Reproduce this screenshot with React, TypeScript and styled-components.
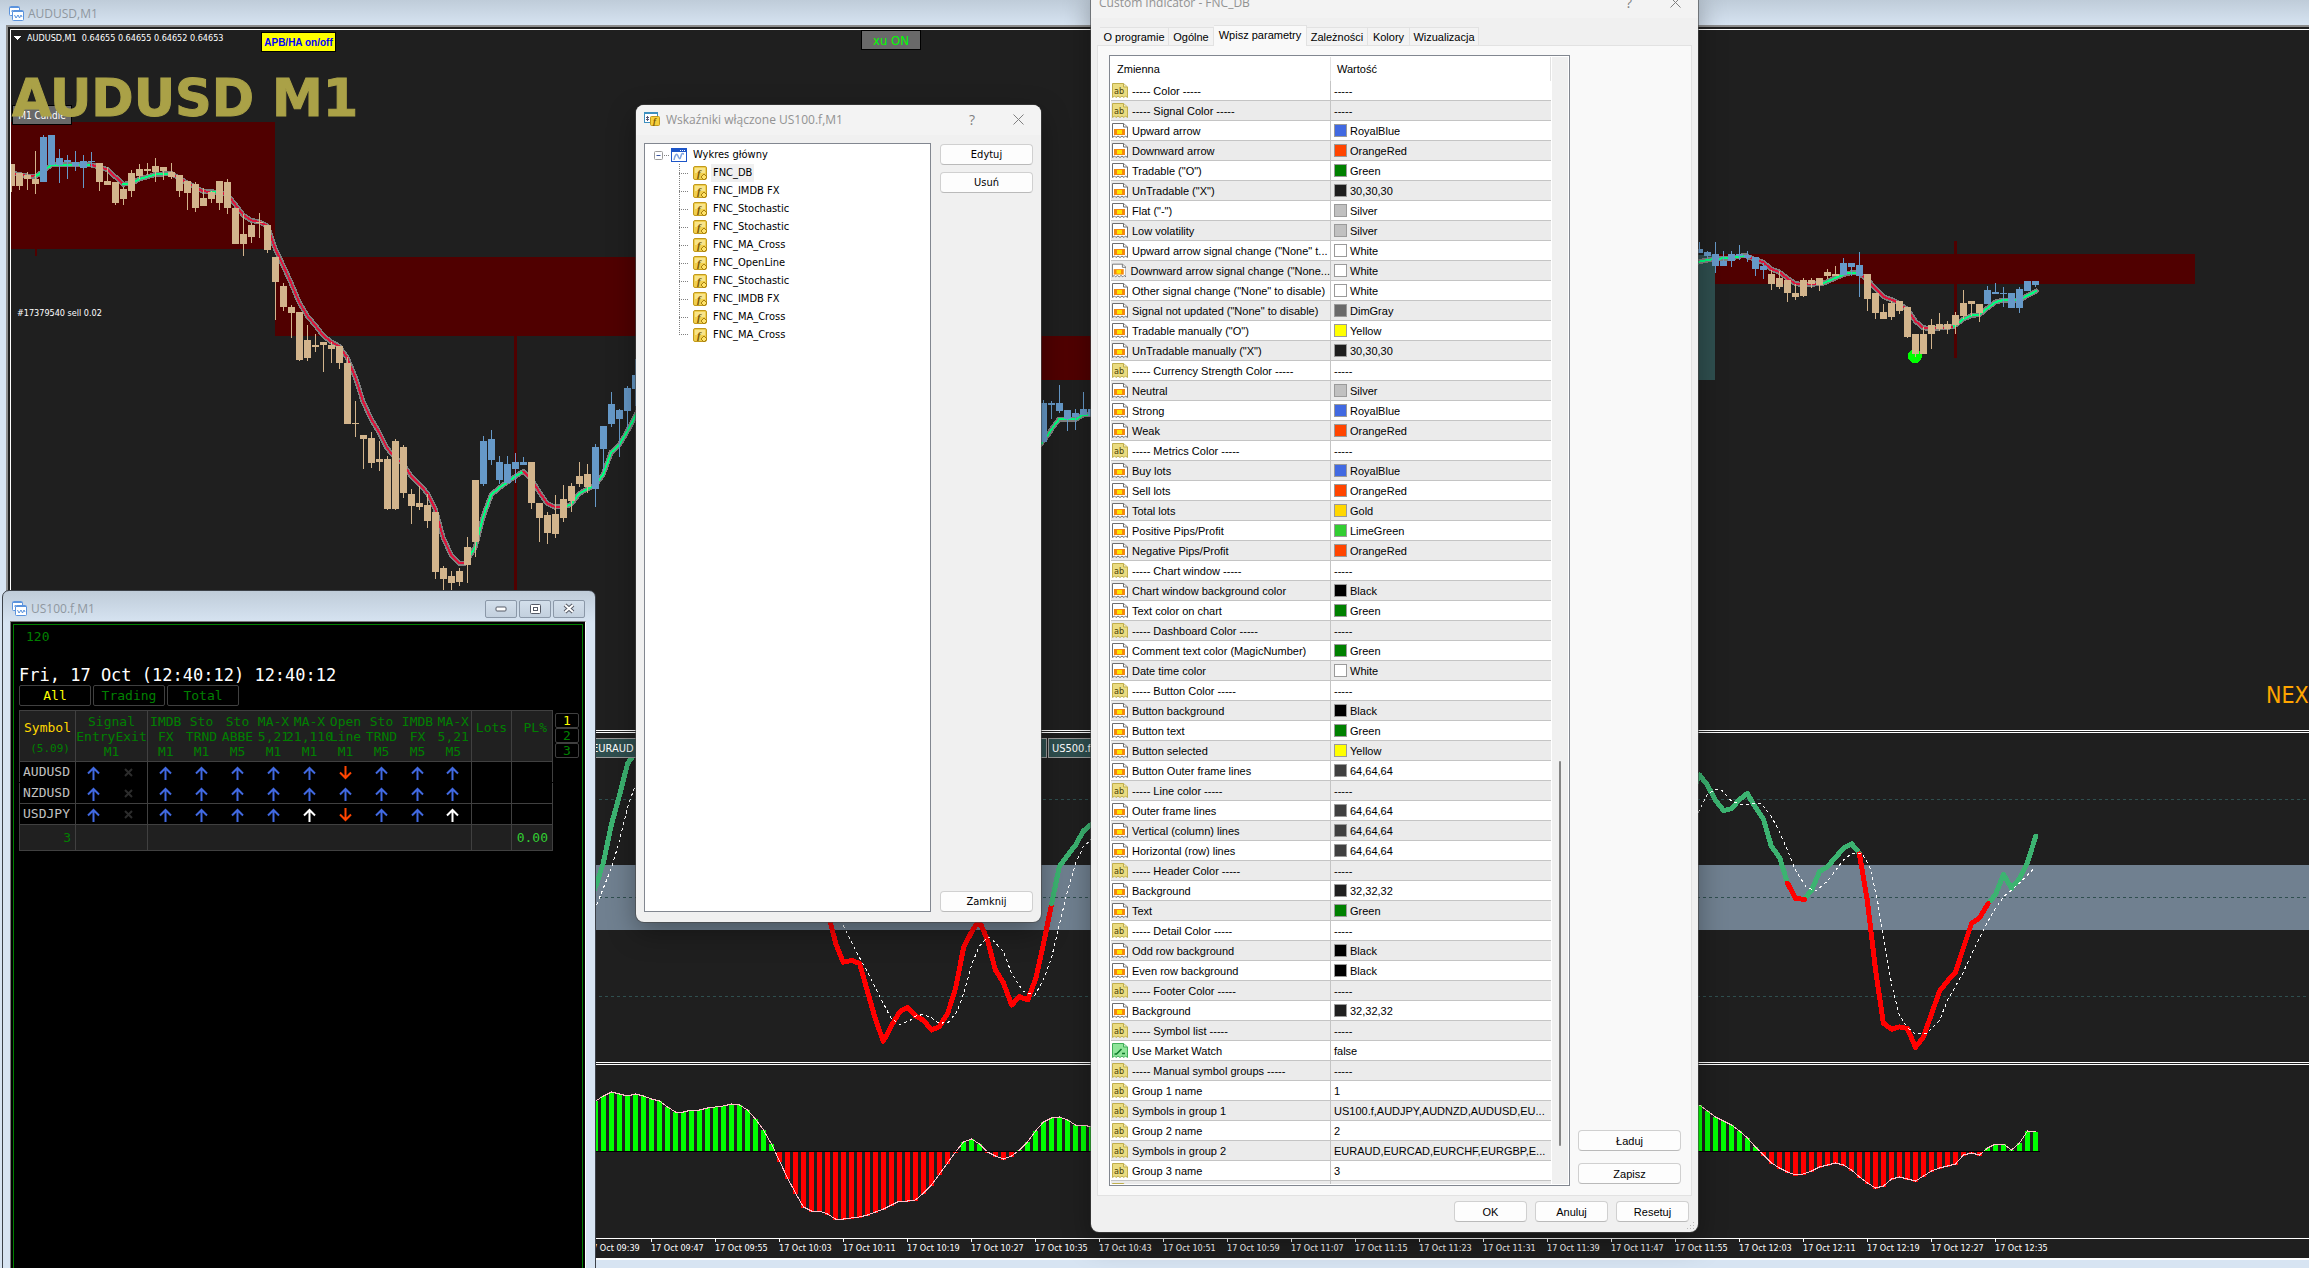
import React from "react";
import styled, { createGlobalStyle } from "styled-components";

const TAHOMA = `"DejaVu Sans Condensed", "DejaVu Sans", "Liberation Sans", sans-serif`;
const ARIAL = `"Liberation Sans", Arial, sans-serif`;
const SEGOE = `"Open Sans", "Noto Sans", sans-serif`;
const MONO = `"DejaVu Sans Mono", "Liberation Mono", monospace`;

const GlobalStyle = createGlobalStyle`
  * { box-sizing: border-box; }
  body { margin: 0; background: #d7e4f2; font-family: ${ARIAL}; font-size: 11px; color: #000; overflow: hidden; }
  button { font: inherit; margin: 0; padding: 0; cursor: pointer; }
`;

/* ---------- chart data ---------- */

type Scale = { sx: number; sy: number; ox: number; oy: number };
type Kind = "t" | "b";
type Candle = [number, number, number, number, Kind];
type Pt = [number, number];
type Line = { color: string; pts: Pt[] };

const RED = "#ff0000";
const SEA = "#3cb371";
const MA_UP = "#00ff7f";
const MA_DOWN = "#dc143c";

const leftScale: Scale = { sx: 2.376, sy: 2.613, ox: 0, oy: 0 };
const midScale: Scale = { sx: 3, sy: 3, ox: 840, oy: 10 };
const rightScale: Scale = { sx: 2.533, sy: 2.45, ox: 1690, oy: 0 };
const lowLeft: Scale = { sx: 3, sy: 2.761, ox: 590, oy: 700 };
const lowRight: Scale = { sx: 2.533, sy: 2.497, ox: 1690, oy: 640 };

const yOf = (s: Scale, v: number) => Math.round(v / s.sy + s.oy);
const slotX = (i: number) => 8 + 8 * i;

/* body top, body bottom, high, low, kind */
const leftCandles: Candle[] = [
  [428, 486, 428, 503, "t"], [452, 486, 452, 497, "t"], [457, 468, 449, 497, "t"], [468, 482, 395, 506, "t"],
  [358, 475, 352, 475, "b"], [352, 430, 352, 430, "b"], [413, 430, 389, 478, "b"], [418, 423, 405, 467, "b"],
  [422, 434, 395, 446, "b"], [421, 440, 405, 490, "b"], [421, 423, 397, 436, "b"], [426, 475, 426, 498, "t"],
  [473, 483, 436, 483, "t"], [475, 530, 475, 536, "t"], [494, 519, 488, 535, "t"], [452, 499, 444, 515, "t"],
  [442, 459, 428, 468, "t"], [442, 446, 426, 458, "t"], [434, 450, 413, 475, "t"], [436, 446, 436, 470, "t"],
  [449, 462, 425, 468, "t"], [457, 499, 457, 515, "t"], [473, 504, 473, 550, "t"], [480, 543, 476, 554, "t"],
  [517, 538, 490, 538, "t"], [502, 519, 498, 530, "t"], [473, 530, 473, 550, "t"], [476, 543, 468, 558, "t"],
  [543, 637, 543, 637, "t"], [612, 637, 560, 668, "t"], [588, 619, 583, 635, "t"], [580, 584, 557, 622, "t"],
  [588, 652, 588, 660, "t"], [672, 737, 672, 835, "t"], [747, 801, 740, 812, "t"], [802, 818, 798, 882, "t"],
  [815, 940, 815, 943, "t"], [889, 936, 849, 942, "t"], [902, 907, 874, 920, "t"], [894, 901, 894, 972, "t"],
  [902, 911, 893, 948, "t"], [905, 949, 903, 964, "t"], [948, 1107, 932, 1107, "t"], [1105, 1108, 1048, 1142, "t"],
  [1137, 1147, 1137, 1225, "t"], [1145, 1210, 1130, 1222, "t"], [1200, 1206, 1152, 1231, "t"], [1200, 1330, 1192, 1333, "t"],
  [1152, 1330, 1147, 1333, "t"], [1168, 1288, 1163, 1301, "t"], [1291, 1322, 1278, 1369, "t"], [1315, 1325, 1270, 1333, "t"],
  [1320, 1361, 1290, 1380, "t"], [1338, 1494, 1338, 1513, "t"], [1484, 1512, 1478, 1541, "t"], [1505, 1523, 1492, 1541, "t"],
  [1492, 1520, 1484, 1530, "t"], [1429, 1476, 1403, 1524, "t"], [1254, 1416, 1254, 1455, "t"], [1152, 1265, 1139, 1269, "b"],
  [1147, 1202, 1124, 1214, "b"], [1207, 1253, 1191, 1265, "b"], [1213, 1262, 1192, 1262, "b"], [1207, 1225, 1184, 1262, "b"],
  [1207, 1214, 1194, 1214, "b"], [1207, 1315, 1207, 1330, "t"], [1315, 1354, 1315, 1415, "t"], [1346, 1393, 1338, 1421, "t"],
  [1343, 1396, 1294, 1405, "t"], [1304, 1354, 1267, 1365, "t"], [1270, 1309, 1262, 1337, "t"], [1244, 1265, 1207, 1272, "t"],
  [1239, 1273, 1213, 1287, "t"], [1168, 1278, 1160, 1325, "b"], [1113, 1173, 1113, 1230, "b"], [1056, 1108, 1023, 1116, "b"],
  [1071, 1095, 1068, 1194, "b"], [1014, 1074, 1008, 1120, "b"], [980, 1017, 938, 1060, "b"],
];
const midCandles: Candle[] = [
  [1179, 1296, 1170, 1296, "b"], [1179, 1185, 1173, 1227, "b"], [1179, 1203, 1125, 1209, "b"], [1200, 1227, 1200, 1263, "b"],
  [1209, 1220, 1197, 1260, "b"], [1197, 1215, 1146, 1215, "b"], [1197, 1218, 1197, 1218, "b"],
];
const rightCandles: Candle[] = [
  [610, 620, 593, 620, "b"], [617, 627, 615, 635, "b"], [622, 652, 593, 669, "b"], [640, 652, 615, 652, "b"],
  [622, 640, 615, 654, "b"], [622, 628, 600, 637, "b"], [625, 632, 615, 642, "b"], [630, 659, 630, 676, "b"],
  [652, 661, 645, 684, "b"], [671, 696, 662, 710, "t"], [682, 703, 665, 707, "t"], [686, 718, 686, 740, "t"],
  [718, 728, 696, 735, "t"], [686, 725, 681, 728, "t"], [686, 696, 682, 706, "t"], [682, 698, 682, 713, "t"],
  [666, 676, 659, 684, "t"], [671, 677, 652, 677, "t"], [644, 674, 632, 674, "b"], [644, 654, 644, 676, "b"],
  [649, 676, 617, 728, "b"], [671, 733, 671, 762, "t"], [718, 767, 718, 782, "t"], [764, 782, 745, 782, "t"],
  [742, 777, 737, 784, "t"], [738, 762, 738, 769, "t"], [752, 826, 752, 828, "t"], [818, 867, 818, 875, "t"],
  [818, 867, 801, 867, "t"], [796, 818, 782, 855, "t"], [794, 806, 767, 811, "t"], [795, 806, 786, 818, "t"],
  [772, 796, 764, 818, "t"], [742, 774, 710, 782, "t"], [737, 745, 737, 775, "t"], [745, 767, 745, 789, "t"],
  [710, 745, 701, 745, "b"], [715, 720, 693, 720, "b"], [717, 720, 703, 752, "b"], [718, 755, 718, 755, "b"],
  [708, 755, 703, 767, "b"], [688, 713, 688, 713, "b"], [688, 698, 688, 703, "b"],
];

const leftMa: Line[] = [
  { color: MA_DOWN, pts: [[27, 452], [46, 456], [65, 460], [84, 461]] },
  { color: MA_UP, pts: [[84, 461], [103, 447], [122, 431], [217, 431]] },
  { color: MA_DOWN, pts: [[217, 431], [255, 443], [293, 481]] },
  { color: MA_UP, pts: [[293, 481], [312, 480], [331, 468], [369, 456], [407, 453]] },
  { color: MA_DOWN, pts: [[407, 453], [445, 478], [483, 500], [502, 501]] },
  { color: MA_UP, pts: [[502, 501], [530, 505]] },
  { color: MA_DOWN, pts: [[530, 505], [545, 515], [559, 535], [578, 562], [597, 576], [616, 580], [635, 590], [654, 650], [673, 694], [692, 740], [711, 790], [730, 825], [749, 850], [768, 877], [787, 893], [806, 905], [825, 935], [844, 985], [863, 1050], [882, 1095], [901, 1130], [920, 1172], [939, 1195], [958, 1213], [977, 1244], [996, 1265], [1015, 1288], [1034, 1330], [1053, 1405], [1072, 1450], [1091, 1472], [1105, 1472]] },
  { color: MA_UP, pts: [[1105, 1472], [1129, 1430], [1148, 1350], [1167, 1293], [1186, 1275], [1205, 1260], [1224, 1245], [1243, 1232]] },
  { color: MA_DOWN, pts: [[1243, 1232], [1262, 1250], [1281, 1285], [1300, 1315], [1319, 1325], [1345, 1323]] },
  { color: MA_UP, pts: [[1345, 1323], [1357, 1318], [1376, 1290], [1395, 1278], [1414, 1268], [1433, 1240], [1452, 1182], [1471, 1163], [1490, 1128], [1520, 1065]] },
];
const midMa: Line[] = [
  { color: MA_UP, pts: [[590, 1318], [622, 1278], [640, 1250], [658, 1227], [710, 1227], [730, 1214], [764, 1214]] },
];
const rightMa: Line[] = [
  { color: MA_UP, pts: [[14, 646], [24, 641], [44, 637], [64, 634], [105, 632], [130, 627], [145, 627]] },
  { color: MA_DOWN, pts: [[145, 628], [166, 636], [186, 643], [206, 659], [227, 667], [247, 682], [267, 695], [287, 697], [335, 695]] },
  { color: MA_UP, pts: [[335, 695], [368, 681], [400, 669], [425, 668]] },
  { color: MA_DOWN, pts: [[425, 668], [449, 684], [470, 708], [490, 727], [520, 738], [551, 758], [571, 787], [591, 803], [612, 805], [652, 802], [668, 800]] },
  { color: MA_UP, pts: [[668, 800], [692, 782], [713, 773], [733, 771], [753, 755], [774, 740], [794, 735], [835, 735], [855, 724], [877, 713]] },
];

const stochLeft: Line[] = [
  { color: SEA, pts: [[10, 530], [18, 512], [40, 450], [64, 345], [88, 265], [113, 175], [140, 140]] },
  { color: RED, pts: [[715, 600], [722, 618], [738, 675], [760, 724], [785, 719], [809, 728], [832, 803], [856, 880], [880, 942], [904, 900], [930, 860], [953, 849], [977, 873], [1000, 884], [1025, 911], [1048, 902], [1073, 865], [1097, 795], [1121, 682], [1145, 640], [1158, 620], [1173, 620], [1193, 665], [1216, 745], [1240, 780], [1265, 842], [1288, 819], [1313, 828], [1337, 770], [1361, 670], [1385, 562]] },
  { color: SEA, pts: [[1385, 562], [1408, 460], [1432, 430], [1457, 400], [1480, 362], [1515, 335]] },
];
const stochRight: Line[] = [
  { color: SEA, pts: [[14, 360], [24, 337], [44, 362], [64, 400], [85, 426], [105, 421], [125, 399], [145, 383], [166, 418], [186, 447], [206, 515], [227, 543], [247, 607]] },
  { color: SEA, pts: [[290, 646], [308, 625], [328, 578], [348, 566], [389, 520], [409, 509], [429, 532]] },
  { color: SEA, pts: [[755, 658], [774, 635], [794, 585], [814, 620], [835, 596], [855, 555], [876, 490]] },
  { color: RED, pts: [[247, 607], [267, 645], [290, 648]] },
  { color: RED, pts: [[429, 534], [449, 650], [470, 825], [490, 957], [511, 972], [530, 966], [551, 970], [571, 1017], [591, 992], [632, 877], [652, 852], [672, 830], [692, 770], [713, 708], [733, 694], [755, 658]] },
];
const signalLeftA: Pt[] = [[20, 565], [40, 520], [64, 465], [88, 390], [113, 295], [136, 235]];
const signalLeftB: Pt[] = [[760, 622], [785, 670], [809, 712], [832, 750], [870, 820], [904, 880], [930, 896], [960, 885], [975, 873], [1000, 868], [1025, 878], [1048, 893], [1075, 890], [1100, 862], [1121, 810], [1145, 730], [1168, 680], [1193, 655], [1204, 658], [1240, 695], [1265, 755], [1300, 805], [1335, 815], [1361, 770], [1385, 710], [1408, 620], [1432, 530], [1457, 450], [1480, 405], [1510, 380]];
const signalRight: Pt[] = [[14, 445], [44, 385], [64, 373], [80, 375], [105, 402], [130, 411], [180, 408], [206, 440], [227, 480], [247, 525], [267, 575], [295, 618], [320, 626], [348, 602], [389, 549], [410, 533], [436, 533], [455, 565], [475, 650], [490, 740], [511, 860], [530, 935], [551, 968], [570, 983], [600, 982], [632, 950], [652, 900], [692, 830], [713, 785], [753, 705], [774, 670], [794, 641], [814, 625], [835, 607], [870, 572]];

const histLeft = [1106, 1093, 1083, 1088, 1093, 1088, 1093, 1101, 1107, 1125, 1138, 1138, 1132, 1132, 1126, 1124, 1121, 1115, 1118, 1132, 1157, 1187, 1227, 1273, 1320, 1361, 1399, 1411, 1411, 1419, 1433, 1433, 1430, 1427, 1421, 1413, 1405, 1394, 1383, 1383, 1380, 1361, 1339, 1309, 1278, 1247, 1220, 1212, 1227, 1247, 1259, 1267, 1259, 1242, 1220, 1190, 1165, 1154, 1151, 1160, 1174, 1174, 1179];
const histRight = [1160, 1176, 1191, 1201, 1211, 1226, 1243, 1266, 1287, 1305, 1318, 1328, 1336, 1333, 1326, 1316, 1311, 1306, 1311, 1323, 1341, 1356, 1368, 1363, 1346, 1341, 1346, 1351, 1338, 1326, 1318, 1313, 1308, 1286, 1281, 1286, 1268, 1258, 1258, 1274, 1256, 1226, 1228];

const toPoints = (s: Scale, pts: Pt[]) =>
  pts.map(([x, y]) => `${(x / s.sx + s.ox).toFixed(1)},${(y / s.sy + s.oy).toFixed(1)}`).join(" ");

const Candles = ({ data, first, scale }: { data: Candle[]; first: number; scale: Scale }) => (
  <>
    {data.map(([top, bottom, high, low, kind], i) => {
      const x = slotX(first + i);
      const fill = kind === "t" ? "#d2b48c" : "#6699c8";
      return (
        <g key={i} fill={fill}>
          <rect x={x + 3} y={yOf(scale, high)} width={1} height={yOf(scale, low) - yOf(scale, high)} />
          <rect x={x} y={yOf(scale, top)} width={7} height={Math.max(1, yOf(scale, bottom) - yOf(scale, top))} />
        </g>
      );
    })}
  </>
);

const MovingAverage = ({ lines, scale }: { lines: Line[]; scale: Scale }) => (
  <g fill="none" strokeLinejoin="round" strokeLinecap="round">
    {lines.map((l, i) => <polyline key={"g" + i} points={toPoints(scale, l.pts)} stroke="#808080" strokeWidth={5} />)}
    {lines.map((l, i) => <polyline key={"c" + i} points={toPoints(scale, l.pts)} stroke={l.color} strokeWidth={2} />)}
  </g>
);

const ThickLines = ({ lines, scale }: { lines: Line[]; scale: Scale }) => (
  <g fill="none" strokeWidth={5} strokeLinejoin="round" strokeLinecap="round">
    {lines.map((l, i) => <polyline key={i} points={toPoints(scale, l.pts)} stroke={l.color} />)}
  </g>
);

const ZERO = 1151;
const Histogram = ({ data, first, scale }: { data: number[]; first: number; scale: Scale }) => (
  <>
    {data.map((v, i) => {
      const y = yOf(scale, v);
      const x = slotX(first + i) + 1;
      return y <= ZERO
        ? <rect key={i} x={x} y={y} width={5} height={ZERO - y} fill="#00ff00" />
        : <rect key={i} x={x} y={ZERO + 1} width={5} height={y - ZERO} fill={RED} />;
    })}
    <polyline
      fill="none"
      stroke="#ffc0cb"
      points={data.map((v, i) => `${slotX(first + i) + 3.5},${yOf(scale, v)}`).join(" ")}
    />
  </>
);

/* ---------- main chart window ---------- */

const Desktop = styled.main`
  position: relative;
  display: flex;
  flex-direction: column;
  height: 100vh;
  overflow: hidden;
  background: #d7e4f2;
`;
const MainTitle = styled.header`
  display: flex;
  align-items: center;
  gap: 4px;
  height: 25px;
  padding: 2px 9px 0;
  flex: none;
  background: linear-gradient(#bfccd9, #d6e3f1);
  color: #8f979f;
  font: 12px ${SEGOE};
`;
const ChartFrame = styled.section`
  flex: 1;
  min-height: 0;
  display: flex;
  flex-direction: column;
  margin: 0 0 8px 6px;
  border: 2px solid #8c8c8c;
  border-right: 0;
  border-bottom-color: #fff;
  padding: 2px 0 0 2px;
  background: #1f1f1f;
`;
const ChartInner = styled.div`
  flex: 1;
  min-height: 0;
  display: flex;
  flex-direction: column;
  border: 1px solid #fff;
  border-width: 1px 0 0 1px;
`;
const Panel = styled.div<{ $h?: number }>`
  position: relative;
  flex: ${(p) => (p.$h ? "none" : "1")};
  height: ${(p) => (p.$h ? p.$h + "px" : "auto")};
  min-height: 0;
  overflow: hidden;
`;
const Divider = styled.div`
  flex: none;
  height: 3px;
  border: 1px solid #fff;
  border-width: 1px 0;
`;
const Canvas = styled.svg`
  display: block;
  width: 100%;
  height: 100%;
  position: absolute;
  inset: 0;
`;
const Note = styled.span<{ $x: number; $y: number }>`
  position: absolute;
  left: ${(p) => p.$x}px;
  top: ${(p) => p.$y}px;
  color: #fff;
  font: 9px/14px ${TAHOMA};
  white-space: pre;
`;
const BigSymbol = styled.h1`
  position: absolute;
  left: 1px;
  top: 37px;
  margin: 0;
  color: #aaa147;
  font: bold 51px/64px "DejaVu Sans", sans-serif;
  -webkit-text-stroke: 1px #aaa147;
  white-space: nowrap;
`;
const ChartButton = styled.button<{ $x: number; $y: number; $w: number; $h: number; $look: "yellow" | "gray" | "teal" | "candle" }>`
  position: absolute;
  left: ${(p) => p.$x}px;
  top: ${(p) => p.$y}px;
  width: ${(p) => p.$w}px;
  height: ${(p) => p.$h}px;
  padding: 0 ${(p) => (p.$look === "teal" ? 3 : 0)}px;
  text-align: ${(p) => (p.$look === "teal" ? "left" : "center")};
  border: 1px solid ${(p) => (p.$look === "teal" ? "#9a9a9a" : "#000")};
  background: ${(p) => ({ yellow: "#ffff00", gray: "#696969", teal: "#2f4f4f", candle: "#696969" })[p.$look]};
  color: ${(p) => ({ yellow: "#0000ff", gray: "#00ff00", teal: "#fff", candle: "#fff" })[p.$look]};
  font: ${(p) => ({
    yellow: `bold 10px ${ARIAL}`,
    gray: `13px ${TAHOMA}`,
    teal: `11px ${TAHOMA}`,
    candle: `10px ${TAHOMA}`,
  })[p.$look]};
  white-space: nowrap;
`;
const NextBar = styled.span`
  position: absolute;
  left: 2255px;
  bottom: 21px;
  color: #ffa500;
  font: 23px/28px ${TAHOMA};
`;
const TimeAxis = styled.div`
  flex: none;
  display: flex;
  height: 20px;
  border-top: 1px solid #fff;
  overflow: hidden;
`;
const TimeTick = styled.span`
  flex: none;
  width: 64px;
  color: #fff;
  font: 9px/12px ${TAHOMA};
  white-space: nowrap;
  &::before { content: ""; display: block; width: 1px; height: 3px; background: #fff; }
`;

const times = Array.from({ length: 32 }, (_, i) => {
  const m = 507 + i * 8;
  return `17 Oct ${String(Math.floor(m / 60)).padStart(2, "0")}:${String(m % 60).padStart(2, "0")}`;
});

const ChartIcon = () => (
  <svg width="15" height="15" viewBox="0 0 15 15" fill="#fff" stroke="#5b93dd">
    <rect x="0.5" y="0.5" width="10" height="9" rx="1" />
    <path d="M1 1.500h9M2.500 5.500l1-1.500 1 2" fill="none" />
    <rect x="3.5" y="4.5" width="11" height="10" rx="1" />
    <path d="M4 5.500h10" />
    <path d="M5.500 9l1.500 3 2-3 1.500 3 1.500-3 1 2" fill="none" />
  </svg>
);

const MainChart = () => (
  <>
    <MainTitle><ChartIcon />AUDUSD,M1</MainTitle>
    <ChartFrame>
      <ChartInner>
        <Panel>
          <Canvas shapeRendering="crispEdges">
            <g transform="translate(-11 -30)">
              <g fill="#500000">
                <rect x={11} y={122} width={264} height={127} />
                <rect x={35} y={249} width={2} height={7} />
                <rect x={275} y={257} width={500} height={79} />
                <rect x={514} y={336} width={3} height={300} />
                <rect x={900} y={336} width={300} height={44} />
                <rect x={1715} y={254} width={480} height={30} />
                <rect x={1954} y={241} width={3} height={117} />
              </g>
              <rect x={1600} y={255} width={115} height={125} fill="#2f4f4f" />
              <circle cx={1915} cy={356} r={7} fill="#00ff00" />
              <MovingAverage lines={leftMa} scale={leftScale} />
              <MovingAverage lines={midMa} scale={midScale} />
              <MovingAverage lines={rightMa} scale={rightScale} />
              <Candles data={leftCandles} first={0} scale={leftScale} />
              <Candles data={midCandles} first={129} scale={midScale} />
              <Candles data={rightCandles} first={211} scale={rightScale} />
              <path d="M14 36h7l-3.500 4z" fill="#fff" />
            </g>
          </Canvas>
          <Note $x={16} $y={1}>AUDUSD,M1  0.64655 0.64655 0.64652 0.64653</Note>
          <Note $x={6} $y={276}>#17379540 sell 0.02</Note>
          <ChartButton $look="yellow" $x={250} $y={2} $w={75} $h={20}>APB/HA on/off</ChartButton>
          <ChartButton $look="gray" $x={850} $y={0} $w={60} $h={20}>xu ON</ChartButton>
          <ChartButton $look="candle" $x={1} $y={75} $w={60} $h={20}>M1 Candle</ChartButton>
          <BigSymbol>AUDUSD M1</BigSymbol>
          <NextBar>NEX</NextBar>
        </Panel>
        <Divider />
        <Panel $h={329}>
          <Canvas shapeRendering="crispEdges">
            <g transform="translate(-11 -733)">
              <rect x={11} y={865} width="100%" height={65} fill="#708090" />
              <g stroke="#2f4f4f" strokeDasharray="3 3">
                <line x1={11} x2={6000} y1={799.5} y2={799.5} />
                <line x1={11} x2={6000} y1={897.5} y2={897.5} />
                <line x1={11} x2={6000} y1={996.5} y2={996.5} />
              </g>
              <ThickLines lines={stochLeft} scale={lowLeft} />
              <ThickLines lines={stochRight} scale={lowRight} />
              <g fill="none" stroke="#fff" strokeDasharray="3 3">
                <polyline points={toPoints(lowLeft, signalLeftA)} />
                <polyline points={toPoints(lowLeft, signalLeftB)} />
                <polyline points={toPoints(lowRight, signalRight)} />
              </g>
            </g>
          </Canvas>
          <ChartButton $look="teal" $x={577} $y={5} $w={60} $h={20}>EURAUD</ChartButton>
          <ChartButton $look="teal" $x={976} $y={5} $w={60} $h={20} aria-label="Symbol" />
          <ChartButton $look="teal" $x={1037} $y={5} $w={60} $h={20}>US500.f</ChartButton>
        </Panel>
        <Divider />
        <Panel $h={173}>
          <Canvas shapeRendering="crispEdges">
            <g transform="translate(-11 -1065)">
              <Histogram data={histLeft} first={73} scale={lowLeft} />
              <Histogram data={histRight} first={211} scale={lowRight} />
              <rect x={11} y={ZERO} width={2029} height={1} fill="#000" />
            </g>
          </Canvas>
        </Panel>
        <TimeAxis>{times.map((t) => <TimeTick key={t}>{t}</TimeTick>)}</TimeAxis>
      </ChartInner>
    </ChartFrame>
  </>
);

/* ---------- dashboard window ---------- */

const DashWindow = styled.section`
  position: absolute;
  left: 2px;
  top: 590px;
  width: 594px;
  bottom: -20px;
  display: flex;
  flex-direction: column;
  border: 1px solid #3c4148;
  border-radius: 7px 7px 0 0;
  background: linear-gradient(#bfccd9, #d7e4f2 32px);
  padding: 0 9px 0 7px;
`;
const DashTitle = styled.header`
  flex: none;
  height: 30px;
  padding: 5px 1px 0 2px;
  display: flex;
  align-items: center;
  gap: 4px;
  color: #8f979f;
  font: 12px ${SEGOE};
`;
const TitleText = styled.span`
  flex: 1;
  white-space: nowrap;
`;
const WinButton = styled.button`
  width: 32px;
  height: 18px;
  border: 1px solid #8b98a8;
  border-radius: 2px;
  background: linear-gradient(#d3dfeb, #c3d0de);
  display: flex;
  align-items: center;
  justify-content: center;
  margin-left: -2px;
`;
const DashBody = styled.div`
  flex: 1;
  border: 1px solid #777;
  border-right-color: #fff;
  background: #000;
  padding: 2px;
`;
const DashInner = styled.div`
  height: 100%;
  border: 1px solid #008000;
  padding: 0 0 0 5px;
  color: #008000;
  font: 13px/15px ${MONO};
`;
const Comment = styled.div`
  padding: 3px 7px 0;
  height: 41px;
  line-height: 18px;
`;
const Clock = styled.div`
  color: #fff;
  font: 17px/18px ${MONO};
`;
const TabRow = styled.div`
  display: flex;
  gap: 2px;
  padding: 1px 0 4px;
`;
const DashButton = styled.button<{ $on?: boolean; $w: number; $h: number }>`
  width: ${(p) => p.$w}px;
  height: ${(p) => p.$h}px;
  border: 1px solid #404040;
  border-radius: 2px;
  background: #000;
  color: ${(p) => (p.$on ? "#ffff00" : "#008000")};
  font: 13px/13px ${MONO};
`;
const TableRow = styled.div`
  display: flex;
  align-items: flex-start;
  gap: 2px;
`;
const Signals = styled.table`
  border-collapse: collapse;
  table-layout: fixed;
  width: 533px;
  border: 1px solid #404040;
`;
const HeadRow = styled.tr`
  height: 51px;
  background: #202020;
  border-bottom: 1px solid #404040;
`;
const SignalRow = styled.tr<{ $line?: boolean }>`
  height: 21px;
  border-bottom: 1px solid ${(p) => (p.$line ? "#404040" : "transparent")};
`;
const FootRow = styled.tr`
  height: 26px;
  background: #202020;
`;
const Th = styled.th<{ $edge?: boolean }>`
  padding: 0;
  font-weight: normal;
  vertical-align: top;
  border-left: ${(p) => (p.$edge ? "1px solid #404040" : "0")};
`;
const Td = styled.td<{ $edge?: boolean; $tone?: string; $align?: string }>`
  padding: 0 4px 0 3px;
  line-height: 18px;
  text-align: ${(p) => p.$align || "center"};
  color: ${(p) => p.$tone || "#008000"};
  border-left: ${(p) => (p.$edge ? "1px solid #404040" : "0")};
`;
const HeadLine = styled.span<{ $tone?: string; $small?: boolean; $gap?: number; $end?: boolean }>`
  display: flex;
  justify-content: ${(p) => (p.$end ? "flex-end" : "center")};
  height: 15px;
  margin-top: ${(p) => p.$gap || 0}px;
  padding-right: ${(p) => (p.$end ? 5 : 0)}px;
  color: ${(p) => p.$tone || "#008000"};
  font-size: ${(p) => (p.$small ? 11 : 13)}px;
  white-space: nowrap;
`;
const PageButtons = styled.div`
  display: flex;
  flex-direction: column;
  padding-top: 3px;
`;

const Arrow = ({ tone }: { tone: string }) => {
  const color = { u: "#4169e1", d: "#ff4500", w: "#ffffff" }[tone];
  return (
    <svg width="13" height="14" viewBox="0 0 13 14" fill="none" stroke={color} strokeWidth="2" style={{ verticalAlign: "middle" }}>
      {tone === "d" ? <path d="M6.500 0v12M1 6.500l5.500 5.500 5.500-5.500" /> : <path d="M6.500 14v-12M1 7.500l5.500-5.500 5.500 5.500" />}
    </svg>
  );
};
const Cross = () => (
  <svg width="9" height="9" viewBox="0 0 9 9" stroke="#2c2c2c" strokeWidth="2" style={{ verticalAlign: "middle" }}>
    <path d="M1 1l7 7M8 1l-7 7" />
  </svg>
);

const indicators = [
  ["IMDB", "FX", "M1"], ["Sto", "TRND", "M1"], ["Sto", "ABBE", "M5"], ["MA-X", "5,21", "M1"], ["MA-X", "21,110", "M1"],
  ["Open", "Line", "M1"], ["Sto", "TRND", "M5"], ["IMDB", "FX", "M5"], ["MA-X", "5,21", "M5"],
];
const symbols = [
  { name: "AUDUSD", marks: "uuuuuduuu" },
  { name: "NZDUSD", marks: "uuuuuuuuu" },
  { name: "USDJPY", marks: "uuuuwduuw" },
];

const Dashboard = () => (
  <DashWindow>
    <DashTitle>
      <ChartIcon />
      <TitleText>US100.f,M1</TitleText>
      <WinButton aria-label="Minimize"><svg width="12" height="6"><rect x="1" y="1" width="10" height="4" rx="1" fill="#fff" stroke="#555a66" /></svg></WinButton>
      <WinButton aria-label="Maximize"><svg width="11" height="10"><rect x="0.5" y="0.5" width="10" height="9" rx="1" fill="#fff" stroke="#555a66" /><rect x="3.500" y="3.500" width="4" height="3" fill="#fff" stroke="#555a66" /></svg></WinButton>
      <WinButton aria-label="Close"><svg width="12" height="11" fill="none"><path d="M2 2l8 7M10 2l-8 7" stroke="#555a66" strokeWidth="4" /><path d="M2 2l8 7M10 2l-8 7" stroke="#fff" strokeWidth="2" /></svg></WinButton>
    </DashTitle>
    <DashBody>
      <DashInner>
        <Comment>120</Comment>
        <Clock>Fri, 17 Oct (12:40:12) 12:40:12</Clock>
        <TabRow>
          <DashButton $w={72} $h={21} $on>All</DashButton>
          <DashButton $w={72} $h={21}>Trading</DashButton>
          <DashButton $w={72} $h={21}>Total</DashButton>
        </TabRow>
        <TableRow>
          <Signals>
            <colgroup>
              <col style={{ width: 56 }} />
              {Array.from({ length: 11 }, (_, i) => <col key={i} style={{ width: 36 }} />)}
              <col style={{ width: 40 }} />
              <col style={{ width: 41 }} />
            </colgroup>
            <thead>
              <HeadRow>
                <Th>
                  <HeadLine $tone="#ffd700" $gap={9}>Symbol</HeadLine>
                  <HeadLine $small $gap={6} $end>(5.09)</HeadLine>
                </Th>
                <Th colSpan={2} $edge>
                  <HeadLine $gap={3}>Signal</HeadLine><HeadLine>EntryExit</HeadLine><HeadLine>M1</HeadLine>
                </Th>
                {indicators.map((lines, i) => (
                  <Th key={i} $edge={i === 0}>
                    {lines.map((l, j) => <HeadLine key={j} $gap={j ? 0 : 3}>{l}</HeadLine>)}
                  </Th>
                ))}
                <Th $edge><HeadLine $gap={9}>Lots</HeadLine></Th>
                <Th $edge><HeadLine $gap={9} $end>PL%</HeadLine></Th>
              </HeadRow>
            </thead>
            <tbody>
              {symbols.map((s, r) => (
                <SignalRow key={s.name} $line={r > 0}>
                  <Td $tone="#c0c0c0" $align="left">{s.name}</Td>
                  <Td $edge><Arrow tone="u" /></Td>
                  <Td><Cross /></Td>
                  {s.marks.split("").map((m, i) => <Td key={i} $edge={i === 0}><Arrow tone={m} /></Td>)}
                  <Td $edge /><Td $edge />
                </SignalRow>
              ))}
            </tbody>
            <tfoot>
              <FootRow>
                <Td $align="right">3</Td>
                <Td $edge colSpan={2} /><Td $edge colSpan={9} /><Td $edge />
                <Td $edge $tone="#32cd32" $align="right">0.00</Td>
              </FootRow>
            </tfoot>
          </Signals>
          <PageButtons>
            <DashButton $w={24} $h={15} $on>1</DashButton>
            <DashButton $w={24} $h={15}>2</DashButton>
            <DashButton $w={24} $h={15}>3</DashButton>
          </PageButtons>
        </TableRow>
      </DashInner>
    </DashBody>
  </DashWindow>
);

/* ---------- dialogs ---------- */

const Dialog = styled.section<{ $x: number; $y: number; $w: number }>`
  position: absolute;
  left: ${(p) => p.$x}px;
  top: ${(p) => p.$y}px;
  width: ${(p) => p.$w}px;
  border-radius: 8px;
  background: #f0f0f0;
  box-shadow: 0 0 0 1px rgba(70, 70, 70, 0.6), 0 10px 28px rgba(0, 0, 0, 0.35);
  overflow: hidden;
`;
const DialogTitle = styled.header`
  display: flex;
  align-items: center;
  height: 30px;
  padding: 0 3px 2px 8px;
  gap: 6px;
  background: #f3f3f3;
  color: #929292;
  font: 12px ${SEGOE};
`;
const TitleButton = styled.button`
  width: 40px;
  height: 24px;
  border: 0;
  background: none;
  color: #808080;
  font: 14px ${SEGOE};
`;
const PushButton = styled.button<{ $w: number; $face?: string }>`
  width: ${(p) => p.$w}px;
  height: 21px;
  border: 1px solid #d0d0d0;
  border-bottom-color: #bababa;
  border-radius: 4px;
  background: #fdfdfd;
  color: #000;
  font: 11px ${(p) => p.$face || ARIAL};
`;
const CloseGlyph = () => (
  <svg width="11" height="11" viewBox="0 0 11 11" stroke="#808080"><path d="M0.500 0.500l10 10M10.500 0.500l-10 10" /></svg>
);

const ListBody = styled.div`
  display: flex;
  gap: 9px;
  padding: 8px 8px 10px;
  height: 787px;
`;
const Tree = styled.ul`
  flex: 1;
  margin: 0;
  padding: 2px 0 0 9px;
  list-style: none;
  background: #fff;
  border: 1px solid #828790;
  font: 11px/18px ${TAHOMA};
`;
const TreeRoot = styled.li`
  display: flex;
  align-items: center;
  height: 18px;
  gap: 2px;
`;
const RootLabel = styled.span`
  padding-left: 4px;
`;
const TreeItem = styled.li<{ $last?: boolean }>`
  display: flex;
  align-items: center;
  height: 18px;
  gap: 5px;
  margin-left: 25px;
  &::before {
    content: "";
    width: 9px;
    height: ${(p) => (p.$last ? 9 : 18)}px;
    align-self: flex-start;
    background:
      repeating-linear-gradient(90deg, #808080 0 1px, transparent 1px 2px) 0 ${(p) => (p.$last ? 8 : 9)}px / 10px 1px no-repeat,
      repeating-linear-gradient(#808080 0 1px, transparent 1px 2px) 0 0 / 1px 100% no-repeat;
  }
`;
const TreeLabel = styled.span<{ $selected?: boolean }>`
  padding: 0 2px;
  margin-left: -2px;
  background: ${(p) => (p.$selected ? "#f0f0f0" : "transparent")};
`;
const SideButtons = styled.div`
  display: flex;
  flex-direction: column;
  gap: 7px;
  padding-top: 1px;
`;
const FileButtons = styled.div`
  display: flex;
  flex-direction: column;
  justify-content: flex-end;
  gap: 12px;
  padding-bottom: 2px;
`;
const Spacer = styled.div`
  flex: 1;
`;

const FnIcon = () => (
  <svg width="15" height="15" viewBox="0 0 15 15">
    <rect x="0.5" y="0.5" width="13" height="13" rx="1.500" fill="#f0cf4e" stroke="#c29a1c" />
    <rect x="2" y="2" width="10" height="5" fill="#f8e48a" />
    <text x="4" y="11" fontFamily="Liberation Serif, serif" fontStyle="italic" fontWeight="bold" fontSize="11" fill="#7d5a06">f</text>
    <path d="M11 8l3 3-3 3-3-3z" fill="#ffe268" stroke="#a8800f" />
  </svg>
);
const DialogIcon = () => (
  <svg width="16" height="15" viewBox="0 0 16 15">
    <rect x="0.5" y="0.5" width="13" height="10" fill="#fff" stroke="#3d8fbf" />
    <path d="M1 1.500h12" stroke="#3d8fbf" strokeWidth="1" />
    <path d="M3.500 4v5M2 5.500h3M2 7.500h3" stroke="#557" />
    <rect x="6.500" y="4.500" width="9" height="9" rx="1" fill="#f5cf3c" stroke="#c29a1c" />
    <text x="9" y="12" fontFamily="Liberation Serif, serif" fontStyle="italic" fontWeight="bold" fontSize="9" fill="#7d5a06">f</text>
  </svg>
);
const RootIcon = () => (
  <svg width="16" height="14" viewBox="0 0 16 14">
    <rect x="0.5" y="0.5" width="15" height="13" fill="#fff" stroke="#1c55c8" />
    <rect x="1" y="1" width="14" height="3" fill="#1c55c8" />
    <path d="M9 2.500h1M11 2.500h1M13 2.500h1" stroke="#fff" />
    <path d="M3 12c1-6 3-7 4-4s2 4 3 0 2-2 3-2" fill="none" stroke="#7fa3e0" strokeWidth="1.500" />
  </svg>
);
const Expander = () => (
  <svg width="15" height="9" viewBox="0 0 15 9">
    <rect x="0.5" y="0.5" width="8" height="8" rx="1" fill="#fff" stroke="#9a9a9a" />
    <path d="M2.500 4.500h4" stroke="#3a55a0" />
    <path d="M10 4.500h5" stroke="#808080" strokeDasharray="1 1" />
  </svg>
);

const attached = ["FNC_DB", "FNC_IMDB FX", "FNC_Stochastic", "FNC_Stochastic", "FNC_MA_Cross", "FNC_OpenLine", "FNC_Stochastic", "FNC_IMDB FX", "FNC_MA_Cross", "FNC_MA_Cross"];

const IndicatorList = () => (
  <Dialog $x={636} $y={105} $w={405}>
    <DialogTitle>
      <DialogIcon />
      <TitleText>Wskaźniki włączone US100.f,M1</TitleText>
      <TitleButton aria-label="Pomoc">?</TitleButton>
      <TitleButton aria-label="Zamknij okno"><CloseGlyph /></TitleButton>
    </DialogTitle>
    <ListBody>
      <Tree>
        <TreeRoot><Expander /><RootIcon /><RootLabel>Wykres główny</RootLabel></TreeRoot>
        {attached.map((name, i) => (
          <TreeItem key={i} $last={i === attached.length - 1}>
            <FnIcon />
            <TreeLabel $selected={i === 0}>{name}</TreeLabel>
          </TreeItem>
        ))}
      </Tree>
      <SideButtons>
        <PushButton $w={93} $face={TAHOMA}>Edytuj</PushButton>
        <PushButton $w={93} $face={TAHOMA}>Usuń</PushButton>
        <Spacer />
        <PushButton $w={93} $face={TAHOMA}>Zamknij</PushButton>
      </SideButtons>
    </ListBody>
  </Dialog>
);

const Tabs = styled.nav`
  display: flex;
  align-items: flex-end;
  height: 27px;
  padding: 0 9px;
`;
const Tab = styled.button<{ $w: number; $active?: boolean }>`
  width: ${(p) => p.$w}px;
  height: ${(p) => (p.$active ? 21 : 18)}px;
  margin-bottom: ${(p) => (p.$active ? -1 : 0)}px;
  padding-bottom: ${(p) => (p.$active ? 3 : 0)}px;
  border: 1px solid #e2e2e2;
  border-width: 1px 1px 0 0;
  background: ${(p) => (p.$active ? "#f9f9f9" : "#f3f3f3")};
  font: 11px ${ARIAL};
  white-space: nowrap;
  position: relative;
`;
const TabPanel = styled.div`
  display: flex;
  gap: 8px;
  margin: 0 6px;
  padding: 9px 10px 9px 11px;
  border: 1px solid #e2e2e2;
  background: #f9f9f9;
`;
const ParamBox = styled.div`
  flex: 1;
  height: 1131px;
  display: flex;
  border: 1px solid #828790;
  background: #fff;
  padding: 1px;
  overflow: hidden;
`;
const ParamScroll = styled.div`
  flex: 1;
  overflow: hidden;
`;
const Params = styled.table`
  width: 100%;
  border-collapse: separate;
  border-spacing: 0;
  table-layout: fixed;
`;
const ParamHead = styled.th`
  height: 24px;
  padding: 0 6px;
  text-align: left;
  font-weight: normal;
  border-right: 1px solid #e2e2e2;
`;
const ParamRow = styled.tr`
  &:nth-child(even) { background: #ebebeb; }
`;
const ParamCell = styled.td<{ $name?: boolean }>`
  height: 20px;
  padding: 0 0 0 ${(p) => (p.$name ? 1 : 3)}px;
  border-bottom: 1px solid #c4c4c4;
  border-right: ${(p) => (p.$name ? "1px solid #c4c4c4" : "0")};
  overflow: hidden;
`;
const CellLine = styled.div<{ $gap: number }>`
  display: flex;
  align-items: center;
  gap: ${(p) => p.$gap}px;
  height: 19px;
  white-space: nowrap;
`;
const Swatch = styled.span<{ $color: string }>`
  width: 13px;
  height: 13px;
  border: 1px solid #9a9a9a;
  background: ${(p) => p.$color};
`;
const ScrollTrack = styled.div`
  width: 16px;
  margin-left: 1px;
  background: #f0f0f0;
  display: flex;
  justify-content: center;
`;
const ScrollThumb = styled.div`
  width: 2px;
  height: 385px;
  margin-top: 704px;
  border-radius: 1px;
  background: #858585;
`;
const FooterButtons = styled.footer`
  display: flex;
  justify-content: flex-end;
  gap: 8px;
  padding: 5px 9px 10px;
`;
const Grip = styled.span`
  position: absolute;
  right: 4px;
  bottom: 3px;
  width: 8px;
  height: 8px;
  background: radial-gradient(circle, #b8b8b8 1px, transparent 1px) 0 0 / 3px 3px;
  clip-path: polygon(100% 0, 100% 100%, 0 100%);
`;

type IconKind = "ab" | "color" | "bool";
const ParamIcon = ({ kind }: { kind: IconKind }) => {
  const fill = { ab: "#ebdc80", color: "#ffffff", bool: "#8fe59a" }[kind];
  const stroke = { ab: "#bfae4c", color: "#6f6f6f", bool: "#3fae58" }[kind];
  return (
    <svg width="16" height="17" viewBox="0 0 16 17">
      <path d="M0.500 15.500V1.500H11.500L15.500 5V15.500L13.500 14L12 15.500L10 14L8 15.500L6 14L4 15.500L2.500 14Z" fill={fill} stroke={stroke} />
      <path d="M11.500 1.500V5H15.500" fill="#fff" fillOpacity="0.500" stroke={stroke} />
      {kind === "ab" && <text x="2" y="12" fontFamily="DejaVu Sans Condensed, sans-serif" fontSize="9" fill="#4a400a">ab</text>}
      {kind === "color" && <><rect x="2" y="7" width="11" height="6" fill="#f58a0c" /><rect x="5" y="8" width="5" height="4" fill="#ffe500" /></>}
      {kind === "bool" && <path d="M2.500 12h2l5-5M10 11.500h3" fill="none" stroke="#0d7a2a" strokeWidth="1.500" />}
    </svg>
  );
};

const DASH = "-----";
const section = (t: string): [string, string] => [`${DASH} ${t} ${DASH}`, DASH];
const palette: Record<string, string> = {
  RoyalBlue: "#4169e1", OrangeRed: "#ff4500", Green: "#008000", Silver: "#c0c0c0", White: "#ffffff", DimGray: "#696969",
  Yellow: "#ffff00", Gold: "#ffd700", LimeGreen: "#32cd32", Black: "#000000",
  "30,30,30": "#1e1e1e", "64,64,64": "#404040", "32,32,32": "#202020",
};
const params: [string, string][] = [
  section("Color"), section("Signal Color"),
  ["Upward arrow", "RoyalBlue"], ["Downward arrow", "OrangeRed"], ['Tradable ("O")', "Green"], ['UnTradable ("X")', "30,30,30"],
  ['Flat ("-")', "Silver"], ["Low volatility", "Silver"], ['Upward arrow signal change ("None" t...', "White"],
  ['Downward arrow signal change ("None...', "White"], ['Other signal change ("None" to disable)', "White"],
  ['Signal not updated ("None" to disable)', "DimGray"], ['Tradable manually ("O")', "Yellow"], ['UnTradable manually ("X")', "30,30,30"],
  section("Currency Strength Color"), ["Neutral", "Silver"], ["Strong", "RoyalBlue"], ["Weak", "OrangeRed"],
  section("Metrics Color"), ["Buy lots", "RoyalBlue"], ["Sell lots", "OrangeRed"], ["Total lots", "Gold"],
  ["Positive Pips/Profit", "LimeGreen"], ["Negative Pips/Profit", "OrangeRed"],
  section("Chart window"), ["Chart window background color", "Black"], ["Text color on chart", "Green"],
  section("Dashboard Color"), ["Comment text color (MagicNumber)", "Green"], ["Date time color", "White"],
  section("Button Color"), ["Button background", "Black"], ["Button text", "Green"], ["Button selected", "Yellow"], ["Button Outer frame lines", "64,64,64"],
  section("Line color"), ["Outer frame lines", "64,64,64"], ["Vertical (column) lines", "64,64,64"], ["Horizontal (row) lines", "64,64,64"],
  section("Header Color"), ["Background", "32,32,32"], ["Text", "Green"],
  section("Detail Color"), ["Odd row background", "Black"], ["Even row background", "Black"],
  section("Footer Color"), ["Background", "32,32,32"],
  section("Symbol list"), ["Use Market Watch", "false"],
  section("Manual symbol groups"), ["Group 1 name", "1"], ["Symbols in group 1", "US100.f,AUDJPY,AUDNZD,AUDUSD,EU..."],
  ["Group 2 name", "2"], ["Symbols in group 2", "EURAUD,EURCAD,EURCHF,EURGBP,E..."], ["Group 3 name", "3"], ["", ""],
];
const tabs: [string, number][] = [["O programie", 69], ["Ogólne", 45], ["Wpisz parametry", 93], ["Zależności", 61], ["Kolory", 42], ["Wizualizacja", 69]];

const ParamDialog = () => (
  <Dialog $x={1091} $y={-12} $w={607}>
    <DialogTitle>
      <TitleText>Custom Indicator - FNC_DB</TitleText>
      <TitleButton aria-label="Pomoc">?</TitleButton>
      <TitleButton aria-label="Zamknij okno"><CloseGlyph /></TitleButton>
    </DialogTitle>
    <Tabs>
      {tabs.map(([t, w], i) => <Tab key={t} $w={w} $active={i === 2}>{t}</Tab>)}
    </Tabs>
    <TabPanel>
      <ParamBox>
        <ParamScroll>
          <Params>
            <colgroup><col style={{ width: 220 }} /><col /></colgroup>
            <thead><tr><ParamHead>Zmienna</ParamHead><ParamHead>Wartość</ParamHead></tr></thead>
            <tbody>
              {params.map(([name, value], i) => {
                const color = palette[value];
                const kind: IconKind = color ? "color" : value === "false" ? "bool" : "ab";
                return (
                  <ParamRow key={i}>
                    <ParamCell $name><CellLine $gap={4}><ParamIcon kind={kind} />{name}</CellLine></ParamCell>
                    <ParamCell><CellLine $gap={3}>{color && <Swatch $color={color} />}{value}</CellLine></ParamCell>
                  </ParamRow>
                );
              })}
            </tbody>
          </Params>
        </ParamScroll>
        <ScrollTrack><ScrollThumb /></ScrollTrack>
      </ParamBox>
      <FileButtons>
        <PushButton $w={103}>Ładuj</PushButton>
        <PushButton $w={103}>Zapisz</PushButton>
      </FileButtons>
    </TabPanel>
    <FooterButtons>
      <PushButton $w={73}>OK</PushButton>
      <PushButton $w={73}>Anuluj</PushButton>
      <PushButton $w={73}>Resetuj</PushButton>
    </FooterButtons>
    <Grip />
  </Dialog>
);

export default function App() {
  return (
    <Desktop>
      <GlobalStyle />
      <MainChart />
      <Dashboard />
      <IndicatorList />
      <ParamDialog />
    </Desktop>
  );
}
